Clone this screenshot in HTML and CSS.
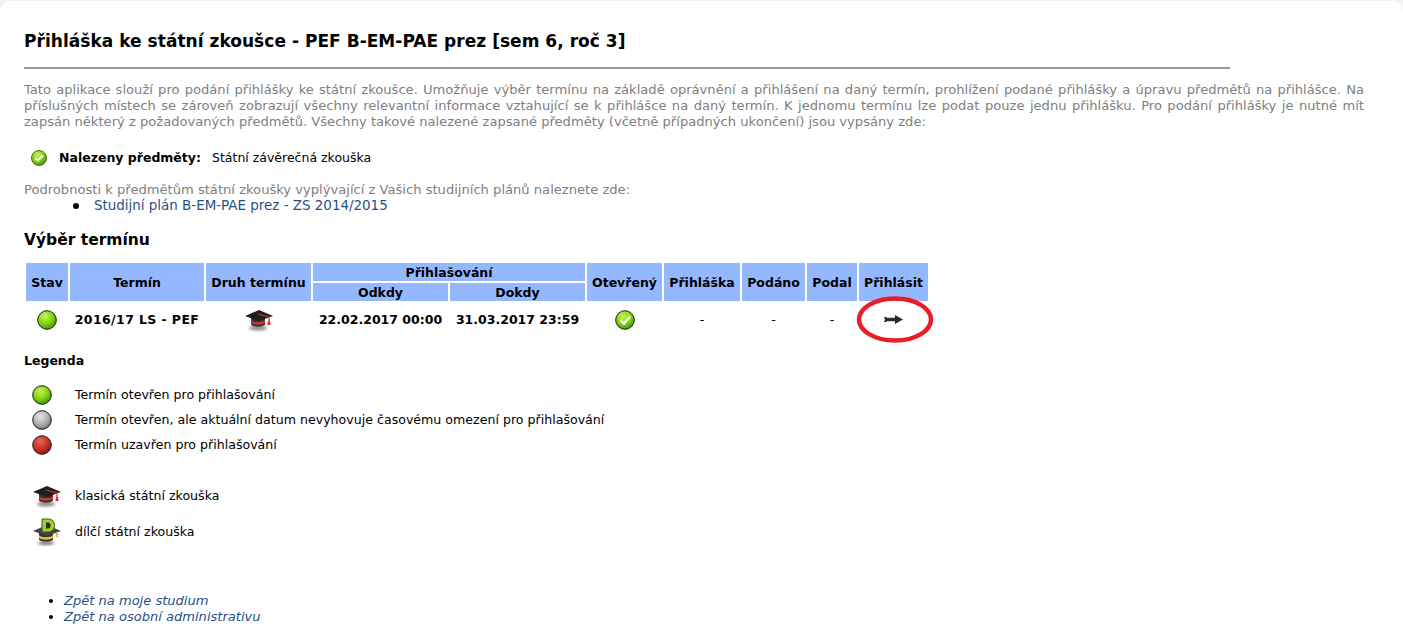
FILE: index.html
```html
<!DOCTYPE html>
<html lang="cs">
<head>
  <meta charset="UTF-8">
  <meta name="viewport" content="width=device-width, initial-scale=1.0">
  <title>Přihláška ke státní zkoušce</title>

  <link rel="stylesheet" href="styles.css">
</head>
<body>
  <svg class="defs" width="0" height="0">
    <defs>
      <radialGradient id="ball-green" cx="40%" cy="30%" r="75%">
        <stop offset="0" stop-color="#c4f25a"/>
        <stop offset="0.55" stop-color="#7fd40e"/>
        <stop offset="1" stop-color="#3f8a05"/>
      </radialGradient>
      <radialGradient id="ball-grey" cx="40%" cy="30%" r="75%">
        <stop offset="0" stop-color="#e6e6e6"/>
        <stop offset="0.55" stop-color="#b4b4b4"/>
        <stop offset="1" stop-color="#6c6c6c"/>
      </radialGradient>
      <radialGradient id="ball-red" cx="40%" cy="30%" r="75%">
        <stop offset="0" stop-color="#e2695c"/>
        <stop offset="0.55" stop-color="#c8332a"/>
        <stop offset="1" stop-color="#7c1510"/>
      </radialGradient>
      <filter id="soft" x="-30%" y="-60%" width="160%" height="220%">
        <feGaussianBlur stdDeviation="1.5"/>
      </filter>
      <symbol id="cap" viewBox="0 0 30 24">
        <ellipse cx="14" cy="20" rx="9" ry="2.5" fill="#888" filter="url(#soft)"/>
        <path d="M7 9v7c0 3.500 14 3.500 14 0V9z" fill="#333"/>
        <path d="M7 12c2 3 12 3 14 0v2.500c-2 3-12 3-14 0z" fill="#d2322d"/>
        <path d="M1 8 15 2l14 6-14 5z" fill="#1f1f1f"/>
        <path d="M14 6l11 3v5" fill="none" stroke="#d2322d" stroke-width="1.200"/>
        <path d="M24 13h2l.6 4h-3.200z" fill="#d2322d"/>
      </symbol>
      <symbol id="cap-d" viewBox="0 0 30 28">
        <ellipse cx="14" cy="25" rx="8" ry="2.500" fill="#888" filter="url(#soft)"/>
        <path d="M7 14v7c0 3.500 14 3.500 14 0v-7z" fill="#333"/>
        <path d="M7 17c2 3 12 3 14 0v2.500c-2 3-12 3-14 0z" fill="#edb93a"/>
        <path d="M1 13l14-6 14 6-14 5z" fill="#444"/>
        <path d="M24 14v5h2v-5z" fill="#edb93a"/>
        <path d="M10 1h6c4.500 0 6.500 3 6.500 6.500S20.500 14 16 14h-6z" fill="#a3cc2e" stroke="#41551a"/>
        <path d="M14 4.500h2c1.800 0 2.500 1.300 2.500 3s-.7 3-2.500 3h-2z" fill="#24300c"/>
      </symbol>
    </defs>
  </svg>

  <div class="sheet">
    <h1 class="title">Přihláška ke státní zkoušce - PEF B-EM-PAE prez [sem 6, roč 3]</h1>
    <hr class="rule">

    <p class="intro">Tato aplikace slouží pro podání přihlášky ke státní zkoušce. Umožňuje výběr termínu na základě oprávnění a přihlášení na daný termín, prohlížení podané přihlášky a úpravu předmětů na přihlášce. Na příslušných místech se zároveň zobrazují všechny relevantní informace vztahující se k přihlášce na daný termín. K jednomu termínu lze podat pouze jednu přihlášku. Pro podání přihlášky je nutné mít zapsán některý z požadovaných předmětů. Všechny takové nalezené zapsané předměty (včetně případných ukončení) jsou vypsány zde:</p>

    <div class="found">
      <svg class="found-icon" width="16" height="16" viewBox="0 0 16 16">
        <circle cx="8" cy="8" r="7.500" fill="url(#ball-green)" stroke="#4a6b14"/>
        <path d="M4.500 8.500 7 10.500l4.500-5" fill="none" stroke="#fff" stroke-width="2"/>
      </svg>
      <b>Nalezeny předměty:</b>
      <span>Státní závěrečná zkouška</span>
    </div>

    <p class="plans-note">Podrobnosti k předmětům státní zkoušky vyplývající z Vašich studijních plánů naleznete zde:</p>
    <ul class="plans">
      <li><a href="#">Studijní plán B-EM-PAE prez - ZS 2014/2015</a></li>
    </ul>

    <h2 class="subtitle">Výběr termínu</h2>

    <div class="table-wrap">
      <table class="terms">
        <colgroup>
          <col class="c-stav"><col class="c-termin"><col class="c-druh"><col class="c-od"><col class="c-do">
          <col class="c-otev"><col class="c-prihl"><col class="c-podano"><col class="c-podal"><col class="c-go">
        </colgroup>
        <tr>
          <th rowspan="2">Stav</th>
          <th rowspan="2">Termín</th>
          <th rowspan="2">Druh termínu</th>
          <th colspan="2" class="low">Přihlašování</th>
          <th rowspan="2">Otevřený</th>
          <th rowspan="2">Přihláška</th>
          <th rowspan="2">Podáno</th>
          <th rowspan="2">Podal</th>
          <th rowspan="2">Přihlásit</th>
        </tr>
        <tr>
          <th class="low">Odkdy</th>
          <th class="low">Dokdy</th>
        </tr>
        <tr class="row">
          <td><svg class="ball" viewBox="0 0 20 20"><circle cx="10" cy="10" r="9.300" fill="url(#ball-green)" stroke="#1d1d1d"/></svg></td>
          <td class="term-name">2016/17 LS - PEF</td>
          <td><svg class="cap" viewBox="0 0 30 24"><use href="#cap"/></svg></td>
          <td>22.02.2017 00:00</td>
          <td>31.03.2017 23:59</td>
          <td>
            <svg class="ball" viewBox="0 0 20 20">
              <circle cx="10" cy="10" r="9.300" fill="url(#ball-green)" stroke="#1d1d1d"/>
              <path d="M5.500 10.500 9 13.500l6-7" fill="none" stroke="#fff" stroke-width="2.400"/>
            </svg>
          </td>
          <td class="dash">-</td>
          <td class="dash">-</td>
          <td class="dash">-</td>
          <td>
            <svg class="go" width="20" height="11" viewBox="0 0 20 11">
              <path d="M0 3h2l1 .8h8V1l8 4.500L11 10V7.200H3l-1 .8H0l1-2.500z" fill="#2a2a2a"/>
            </svg>
          </td>
        </tr>
      </table>
      <svg class="mark" width="78" height="47" viewBox="0 0 78 47">
        <ellipse cx="39" cy="23.500" rx="36" ry="21" fill="none" stroke="#ec1c24" stroke-width="4.500"/>
      </svg>
    </div>

    <h3 class="legend-title">Legenda</h3>
    <ul class="legend">
      <li><svg class="ball" viewBox="0 0 20 20"><circle cx="10" cy="10" r="9.300" fill="url(#ball-green)" stroke="#1d1d1d"/></svg><span>Termín otevřen pro přihlašování</span></li>
      <li><svg class="ball" viewBox="0 0 20 20"><circle cx="10" cy="10" r="9.300" fill="url(#ball-grey)" stroke="#1d1d1d"/></svg><span>Termín otevřen, ale aktuální datum nevyhovuje časovému omezení pro přihlašování</span></li>
      <li><svg class="ball" viewBox="0 0 20 20"><circle cx="10" cy="10" r="9.300" fill="url(#ball-red)" stroke="#1d1d1d"/></svg><span>Termín uzavřen pro přihlašování</span></li>
    </ul>

    <ul class="kinds">
      <li><svg class="cap" viewBox="0 0 30 24"><use href="#cap"/></svg><span>klasická státní zkouška</span></li>
      <li><svg class="cap cap-tall" viewBox="0 0 30 28"><use href="#cap-d"/></svg><span>dílčí státní zkouška</span></li>
    </ul>

    <ul class="back">
      <li><a href="#">Zpět na moje studium</a></li>
      <li><a href="#">Zpět na osobní administrativu</a></li>
    </ul>
  </div>
</body>
</html>
```

FILE: styles.css
```css
html, body {
  margin: 0;
  padding: 0;
}
body {
  height: 641px;
  overflow: hidden;
  background: #f2f2f2;
  color: #000;
  font-family: Verdana, "DejaVu Sans", sans-serif;
  font-size: 12.5px;
  line-height: 16px;
}
.defs {
  display: block;
  height: 0;
}
a {
  color: #1f5288;
  text-decoration: none;
}

/* white sheet */
.sheet {
  margin-top: 1px;
  height: 640px;
  padding: 0 39px 0 24px;
  background: #fff;
  border-radius: 10px 10px 0 0;
}
.title {
  margin: 0;
  padding-top: 30px;
  font-size: 17px;
  line-height: 20px;
  letter-spacing: 0.03px;
}
.rule {
  width: 1206px;
  height: 2px;
  margin: 16px 0 0;
  border: 0;
  background: #999;
}
.intro {
  margin: 13px 0 0;
  color: #808080;
  font-size: 13.1px;
  text-align: justify;
}

.found {
  display: flex;
  align-items: center;
  margin-top: 20px;
  padding-left: 7px;
}
.found-icon {
  margin-right: 12px;
}
.found b {
  margin-right: 11px;
}

.plans-note {
  margin: 16px 0 0;
  color: #808080;
  font-size: 13.1px;
}
.plans {
  margin: 0;
  padding: 0 0 0 49px;
  list-style: none;
}
.plans li {
  display: flex;
  align-items: center;
  font-size: 13.45px;
}
.plans li::before {
  content: "";
  width: 6px;
  height: 6px;
  margin-right: 15px;
  border-radius: 50%;
  background: #000;
}

.subtitle {
  margin: 16px 0 0;
  font-size: 15.5px;
  line-height: 20px;
}

/* table of terms */
.table-wrap {
  position: relative;
  margin-top: 11px;
}
.terms {
  border-collapse: separate;
  border-spacing: 2px;
  table-layout: fixed;
  width: 906px;
}
.c-stav { width: 42px; }
.c-termin { width: 134px; }
.c-druh { width: 105px; }
.c-od { width: 135px; }
.c-do { width: 135px; }
.c-otev { width: 75px; }
.c-prihl { width: 76px; }
.c-podano { width: 63px; }
.c-podal { width: 50px; }
.c-go { width: 69px; }
.terms th {
  padding: 1px 0 0;
  height: 17px;
  background: #94b8ff;
  font-size: 12.5px;
  line-height: 16px;
  white-space: nowrap;
}
.row td {
  height: 33px;
  padding: 0;
  font-weight: bold;
  text-align: center;
  white-space: nowrap;
}
.row .term-name {
  letter-spacing: 0.4px;
}
.row .dash {
  font-weight: normal;
}
.row svg {
  display: block;
  margin: 0 auto;
}
.mark {
  position: absolute;
  left: 832px;
  top: 35px;
}
.ball {
  width: 20px;
  height: 20px;
}
.cap {
  width: 30px;
  height: 24px;
}
.cap-tall {
  height: 28px;
}

/* legend */
.legend-title {
  margin: 15px 0 0;
  font-size: 12.5px;
  line-height: 16px;
}
.legend,
.kinds {
  margin: 0;
  padding: 0;
  list-style: none;
  font-size: 12.6px;
}
.legend {
  margin-top: 13px;
}
.legend li {
  display: flex;
  align-items: center;
  height: 25px;
  padding-left: 8px;
}
.legend span,
.kinds span {
  margin-left: 23px;
}
.kinds {
  margin-top: 21px;
}
.kinds li {
  display: flex;
  align-items: center;
  height: 36px;
  padding-left: 8px;
}
.kinds .cap {
  margin-right: -10px;
}

.back {
  margin: 43px 0 0;
  padding-left: 40px;
  font-size: 13.05px;
  font-style: italic;
}
```
